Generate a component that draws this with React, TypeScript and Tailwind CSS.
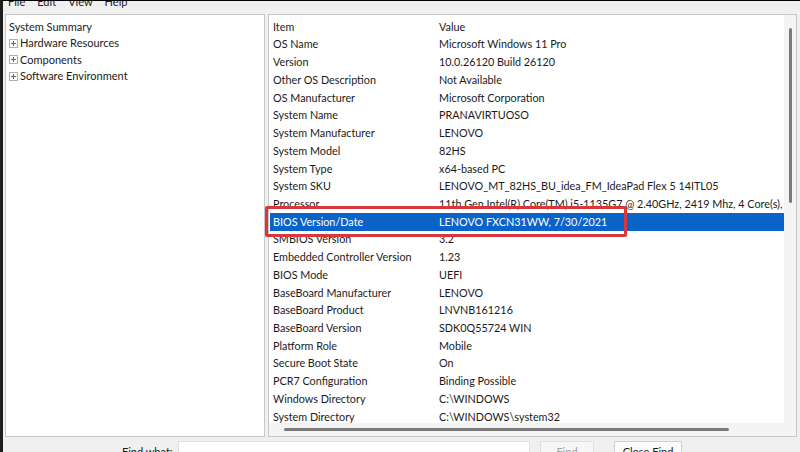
import React from "react";

const rows: [string, string][] = [
  ["Item", "Value"],
  ["OS Name", "Microsoft Windows 11 Pro"],
  ["Version", "10.0.26120 Build 26120"],
  ["Other OS Description", "Not Available"],
  ["OS Manufacturer", "Microsoft Corporation"],
  ["System Name", "PRANAVIRTUOSO"],
  ["System Manufacturer", "LENOVO"],
  ["System Model", "82HS"],
  ["System Type", "x64-based PC"],
  ["System SKU", "LENOVO_MT_82HS_BU_idea_FM_IdeaPad Flex 5 14ITL05"],
  ["Processor", "11th Gen Intel(R) Core(TM) i5-1135G7 @ 2.40GHz, 2419 Mhz, 4 Core(s),"],
  ["BIOS Version/Date", "LENOVO FXCN31WW, 7/30/2021"],
  ["SMBIOS Version", "3.2"],
  ["Embedded Controller Version", "1.23"],
  ["BIOS Mode", "UEFI"],
  ["BaseBoard Manufacturer", "LENOVO"],
  ["BaseBoard Product", "LNVNB161216"],
  ["BaseBoard Version", "SDK0Q55724 WIN"],
  ["Platform Role", "Mobile"],
  ["Secure Boot State", "On"],
  ["PCR7 Configuration", "Binding Possible"],
  ["Windows Directory", "C:\\WINDOWS"],
  ["System Directory", "C:\\WINDOWS\\system32"],
];

function Plus() {
  return (
    <svg width="9" height="9" viewBox="0 0 9 9" className="shrink-0">
      <rect x="0.5" y="0.5" width="8" height="8" fill="#fff" stroke="#b0b0b0" />
      <path d="M2 4.5h5M4.5 2v5" stroke="#666" strokeWidth="1" />
    </svg>
  );
}

export default function App() {
  return (
    <div
      className="relative w-[800px] h-[452px] overflow-hidden bg-[#f0f0f0] border-l-[3px] border-[#1e1e1e] text-[#1a1a1a] flex flex-col"
      style={{ fontFamily: 'Lato, "Noto Sans", sans-serif' }}
    >
      <div className="h-[1px] bg-black shrink-0" />
      {/* menu bar */}
      <div className="h-[13px] shrink-0 overflow-hidden">
        <div className="flex gap-[12px] pl-[5px] -mt-[6px] text-[11px] leading-[14px]">
          <span>File</span>
          <span>Edit</span>
          <span>View</span>
          <span>Help</span>
        </div>
      </div>
      {/* main panes */}
      <div className="flex h-[423px] shrink-0 pl-[2px] pr-[3px] gap-[3px]">
        {/* left tree */}
        <div className="w-[260px] shrink-0 bg-white border border-[#c8c8c8] pt-[3px] text-[11px]">
          <div className="h-[17px] leading-[17px] pl-[3px]">System Summary</div>
          {["Hardware Resources", "Components", "Software Environment"].map((t) => (
            <div key={t} className="h-[16.5px] flex items-center gap-[2px] pl-[3px]">
              <Plus />
              <span>{t}</span>
            </div>
          ))}
        </div>
        {/* right list */}
        <div className="flex-1 min-w-0 bg-white border border-[#c8c8c8] flex flex-col">
          <div className="flex flex-1 min-h-0">
            <div className="flex-1 min-w-0 overflow-hidden pt-[3px] pl-[1px] text-[10.8px]">
              {rows.map(([k, v]) => {
                const sel = k === "BIOS Version/Date";
                return (
                  <div
                    key={k}
                    className={`h-[17.73px] flex items-center whitespace-nowrap pl-[3px] ${
                      sel ? "bg-[#0a64c8] text-white" : ""
                    }`}
                  >
                    <span className="w-[166px] shrink-0">{k}</span>
                    <span>{v}</span>
                  </div>
                );
              })}
            </div>
            <div className="w-[12px] shrink-0 bg-[#f4f4f4] flex justify-center pt-[13px]">
              <div className="w-[3px] h-[175px] bg-[#7a7a7a] rounded-full" />
            </div>
          </div>
          <div className="h-[13px] shrink-0 bg-[#f4f4f4] flex items-center pl-[15px]">
            <div className="w-[445px] h-[3px] bg-[#7a7a7a] rounded-full" />
          </div>
        </div>
      </div>
      {/* find bar */}
      <div className="flex items-start pt-[4px] text-[11px] leading-[14px]">
        <span className="ml-[119px] mt-[4px] w-[56px]">Find what:</span>
        <div className="w-[352px] h-[20px] bg-white border border-[#e0e0e0]" />
        <div className="ml-[10px] w-[54px] h-[20px] bg-[#f6f6f6] border border-[#e0e0e0] text-[#a0a0a0] text-center pt-[3px]">
          Find
        </div>
        <div className="ml-[20px] w-[68px] h-[20px] bg-[#fbfbfb] border border-[#d0d0d0] text-center pt-[3px]">
          Close Find
        </div>
      </div>
      {/* red annotation box */}
      <div className="absolute left-[262px] top-[206px] w-[362px] h-[31px] border-[3px] border-[#d8383b] rounded-[2px]" />
    </div>
  );
}
